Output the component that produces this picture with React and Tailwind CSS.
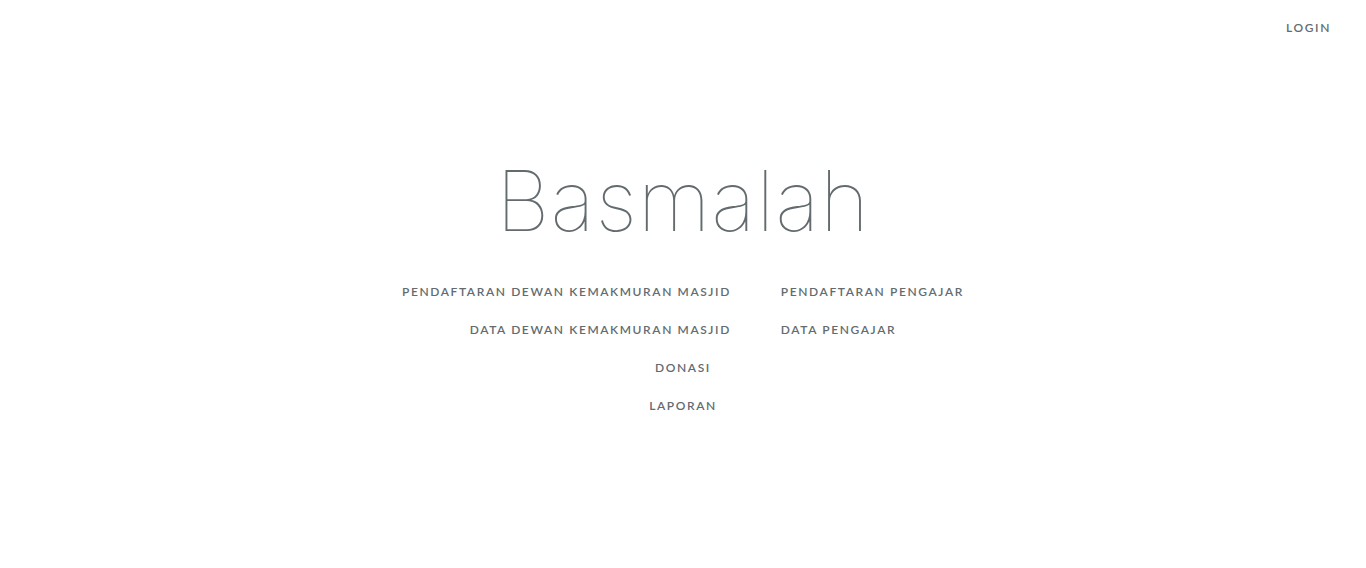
import React from 'react';

const linkCls =
  "px-[25px] text-[12px] font-semibold tracking-[0.1rem] uppercase text-[#636b6f] leading-[38px] whitespace-nowrap";

export default function App() {
  return (
    <div className="relative min-h-screen bg-white font-['Lato','Liberation_Sans',sans-serif] text-[#636b6f]">
      <div className="absolute right-[10px] top-[18px] flex">
        <a href="#" className="px-[25px] text-[12px] font-semibold tracking-[0.1rem] uppercase text-[#636b6f] leading-[20px]">
          Login
        </a>
      </div>

      <div className="flex flex-col items-center pt-[146px]">
        <div className="text-[84px] leading-[110px] font-['Inter',sans-serif] font-thin tracking-[0.8px]">
          Basmalah
        </div>

        <div className="mt-[17px] grid grid-cols-[auto_auto] w-fit mx-auto">
          <a href="#" className={linkCls + " text-right"}>Pendaftaran Dewan Kemakmuran Masjid</a>
          <a href="#" className={linkCls + " text-left"}>Pendaftaran Pengajar</a>
          <a href="#" className={linkCls + " text-right"}>Data Dewan Kemakmuran Masjid</a>
          <a href="#" className={linkCls + " text-left"}>Data Pengajar</a>
          <a href="#" className={linkCls + " col-span-2 text-center"}>Donasi</a>
          <a href="#" className={linkCls + " col-span-2 text-center"}>Laporan</a>
        </div>
      </div>
    </div>
  );
}
